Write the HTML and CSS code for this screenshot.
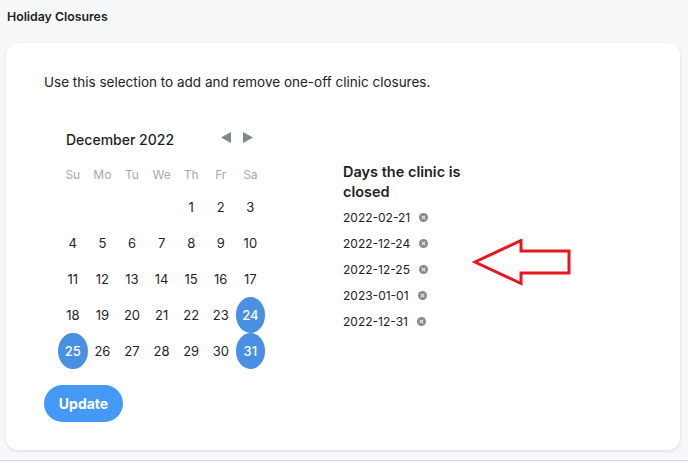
FILE: index.html
```html
<!DOCTYPE html>
<html>
<head>
<meta charset="utf-8">
<link rel="stylesheet" href="styles.css">
</head>
<body>
<div class="page">
  <h1 class="title">Holiday Closures</h1>
  <div class="card">
    <p class="intro">Use this selection to add and remove one-off clinic closures.</p>
    <div class="main">
      <div class="calendar">
        <div class="cal-head">
          <span class="month">December 2022</span>
          <span class="navs">
            <svg class="nav" width="10" height="11" viewBox="0 0 10 11"><path d="M10 0 L10 11 L0 5.5 Z" fill="#7d8a8a"/></svg>
            <svg class="nav" width="10" height="11" viewBox="0 0 10 11"><path d="M0 0 L0 11 L10 5.5 Z" fill="#7d8a8a"/></svg>
          </span>
        </div>
        <div class="grid">
          <span class="wd">Su</span><span class="wd">Mo</span><span class="wd">Tu</span><span class="wd">We</span><span class="wd">Th</span><span class="wd">Fr</span><span class="wd">Sa</span>
          <span></span><span></span><span></span><span></span><span class="d">1</span><span class="d">2</span><span class="d">3</span>
          <span class="d">4</span><span class="d">5</span><span class="d">6</span><span class="d">7</span><span class="d">8</span><span class="d">9</span><span class="d">10</span>
          <span class="d">11</span><span class="d">12</span><span class="d">13</span><span class="d">14</span><span class="d">15</span><span class="d">16</span><span class="d">17</span>
          <span class="d">18</span><span class="d">19</span><span class="d">20</span><span class="d">21</span><span class="d">22</span><span class="d">23</span><span class="d sel">24</span>
          <span class="d sel">25</span><span class="d">26</span><span class="d">27</span><span class="d">28</span><span class="d">29</span><span class="d">30</span><span class="d sel">31</span>
        </div>
        <button class="btn">Update</button>
      </div>
      <div class="closed">
        <h2 class="closed-title">Days the clinic is closed</h2>
        <ul class="list">
          <li><span>2022-02-21</span><span class="x"></span></li>
          <li><span>2022-12-24</span><span class="x"></span></li>
          <li><span>2022-12-25</span><span class="x"></span></li>
          <li><span>2023-01-01</span><span class="x"></span></li>
          <li><span>2022-12-31</span><span class="x"></span></li>
        </ul>
      </div>
      <svg class="arrow" width="100" height="50" viewBox="0 0 100 50">
        <path d="M3 23 L49 1.5 L49 12 L97 12 L97 34 L49 34 L49 44.5 Z" fill="none" stroke="#e8161e" stroke-width="3" stroke-linejoin="miter"/>
      </svg>
    </div>
  </div>
</div>
</body>
</html>
```
FILE: styles.css
```css
* { box-sizing: border-box; }
html, body { margin: 0; padding: 0; }
body {
  background: #f7f8fa;
  font-family: Inter, "Noto Sans", sans-serif;
  color: #1f2328;
  width: 688px;
  height: 463px;
  overflow: hidden;
}
.page {
  height: 461px;
  border-bottom: 1px solid #d6d8db;
  padding: 0 8px 0 6px;
}
.title {
  margin: 0;
  padding: 9px 0 0 1px;
  height: 43px;
  font-size: 12.3px;
  font-weight: 600;
  line-height: 16px;
  color: #1d1f24;
}
.card {
  background: #fff;
  border-radius: 12px;
  box-shadow: 0 1px 3px rgba(0,0,0,0.12);
  height: 407px;
  padding: 29px 38px 0 38px;
}
.intro {
  margin: 0;
  font-size: 13.5px;
  line-height: 20px;
  color: #222;
}
.main {
  display: flex;
  align-items: flex-start;
  margin-top: 34px;
}
.calendar {
  margin-left: 14px;
  width: 207px;
}
.cal-head {
  height: 26px;
  display: flex;
  align-items: center;
  justify-content: space-between;
  margin-bottom: 7px;
}
.month {
  padding-left: 8px;
  font-size: 14px;
  font-weight: 500;
  color: #1d1f24;
}
.navs {
  display: flex;
  gap: 12px;
  margin-right: 12px;
  margin-top: -3px;
}
.nav { display: block; }
.grid {
  display: grid;
  grid-template-columns: repeat(7, 29.6px);
  grid-auto-rows: 36px;
  grid-template-rows: 30px;
}
.wd {
  display: flex;
  align-items: center;
  justify-content: center;
  font-size: 12px;
  color: #a3abb0;
}
.d {
  display: flex;
  align-items: center;
  justify-content: center;
  font-size: 13px;
  color: #1f2328;
  border-radius: 50%;
}
.d.sel {
  background: #4a90e2;
  color: #fff;
  font-weight: 500;
}
.btn {
  margin-top: 16px;
  margin-left: -14px;
  width: 79px;
  height: 37px;
  border: none;
  border-radius: 19px;
  background: #4499f6;
  color: #fff;
  font-family: Inter, "Noto Sans", sans-serif;
  font-size: 14px;
  font-weight: 700;
  padding: 0;
}
.closed {
  margin-left: 78px;
  margin-top: 36px;
  width: 130px;
}
.closed-title {
  margin: 0 0 2px 0;
  font-size: 14.5px;
  font-weight: 600;
  line-height: 20px;
  color: #1d1f24;
}
.list {
  list-style: none;
  margin: 0;
  padding: 0;
}
.list li {
  height: 26px;
  display: flex;
  align-items: center;
  font-size: 12px;
  color: #222;
}
.x {
  position: relative;
  width: 9px;
  height: 9px;
  border-radius: 50%;
  background: #8a8a8e;
  margin-left: 9px;
}
.x::before, .x::after {
  content: "";
  position: absolute;
  left: 2px;
  top: 4px;
  width: 5px;
  height: 1px;
  background: #fff;
  transform: rotate(45deg);
}
.x::after { transform: rotate(-45deg); }
.arrow {
  margin-left: -1px;
  margin-top: 113px;
}
```
